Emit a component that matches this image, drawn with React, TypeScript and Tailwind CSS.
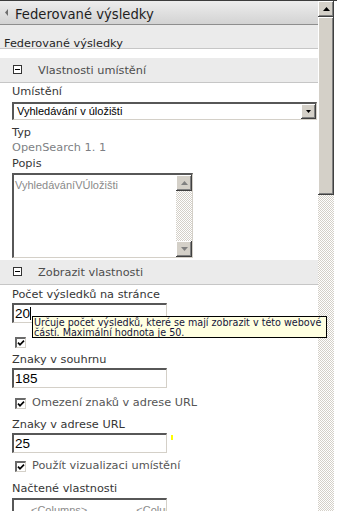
import React from "react";

const raised =
  "bg-[#d4d0c8] shadow-[inset_-1px_-1px_#404040,inset_1px_1px_#ffffff,inset_-2px_-2px_#808080]";
const inset =
  "border-t-2 border-l-2 border-r border-b border-t-[#575757] border-l-[#575757] border-r-[#d4d0c8] border-b-[#d4d0c8] bg-white";
const checker =
  "[background-image:repeating-conic-gradient(#d4d0c8_0%_25%,#ffffff_0%_50%)] [background-size:2px_2px]";
const dv = "font-['DejaVu_Sans',sans-serif]";
const ar = "font-['Liberation_Sans',Arial,sans-serif]";

function MinusBox() {
  return (
    <div className="mt-[7px] w-[9px] h-[9px] border border-[#333333] bg-white flex items-center justify-center shrink-0">
      <div className="w-[5px] h-px bg-black" />
    </div>
  );
}

function Section({ title, mt }: { title: string; mt: string }) {
  return (
    <div
      className={`${mt} h-[25px] shrink-0 bg-[#ebebeb] border-b border-[#c6c6c6] flex items-start pl-[13px]`}
    >
      <MinusBox />
      <span className={`${dv} ml-[16px] mt-[6px] leading-[13px] text-[11.3px] text-[#4d4d4d] whitespace-nowrap`}>
        {title}
      </span>
    </div>
  );
}

function Label({ text, mt, color = "text-[#363636]" }: { text: string; mt: string; color?: string }) {
  return (
    <div className={`${dv} ${mt} ${color} text-[11.3px] leading-[14px] whitespace-nowrap`}>{text}</div>
  );
}

function Check() {
  return (
    <div className="w-[11px] h-[11px] border-t-2 border-l-2 border-r border-b border-t-[#6a6a6a] border-l-[#6a6a6a] border-r-[#d4d0c8] border-b-[#d4d0c8] bg-white flex items-center justify-center shrink-0">
      <svg width="8" height="8" viewBox="0 0 8 8">
        <path d="M1 3.6 L3 5.8 L7 1.6" stroke="#000" strokeWidth="1.7" fill="none" />
      </svg>
    </div>
  );
}

function CheckRow({ text, mt }: { text: string; mt: string }) {
  return (
    <div className={`${mt} h-[14px] flex items-center pl-[3px]`}>
      <Check />
      <span className={`${dv} ml-[6px] text-[11.3px] leading-[14px] text-[#555555] whitespace-nowrap`}>{text}</span>
    </div>
  );
}

function TextInput({ value, mt, cursor }: { value: string; mt: string; cursor?: boolean }) {
  return (
    <div className={`${inset} ${mt} w-[155px] h-[20px] flex items-center pl-px`}>
      <span className={`${ar} text-[13.5px] leading-[17px] text-black`}>{value}</span>
      {cursor && <span className="w-px h-[13px] bg-black" />}
    </div>
  );
}

function UpTri({ color = "#000" }: { color?: string }) {
  return (
    <svg width="7" height="4" viewBox="0 0 7 4">
      <polygon points="0,4 3.5,0 7,4" fill={color} />
    </svg>
  );
}

export default function App() {
  return (
    <div className="relative w-[337px] h-[511px] overflow-hidden bg-white border-t border-[#3c3c3c] flex">
      <div className="w-[318px] shrink-0">
        {/* header */}
        <div className="h-[24px] border-b border-[#8e8e8e] bg-linear-to-b from-[#ededed] to-[#d3d3d3] flex items-start">
          <svg className="mt-[8px] ml-[5px]" width="3" height="7" viewBox="0 0 3 7">
            <polygon points="3,0 0,3.5 3,7" fill="#6e6e6e" />
          </svg>
          <span className={`${dv} ml-[7px] pt-[6px] leading-[16px] text-[13.2px] text-[#1e1e1e] whitespace-nowrap`}>
            Federované výsledky
          </span>
        </div>

        {/* title band */}
        <div className="h-[24px] bg-[#ebebeb] border-b border-[#c6c6c6] pl-[4px] pt-[12px]">
          <div className={`${dv} text-[11.3px] leading-[13px] text-[#262626] whitespace-nowrap`}>
            Federované výsledky
          </div>
        </div>

        <Section title="Vlastnosti umístění" mt="mt-[9px]" />

        <div className="pl-[12px] pr-px flex flex-col">
          <Label text="Umístění" mt="mt-[2px]" />
          <div className={`${inset} mt-[3px] h-[18px] flex items-center`}>
            <span className={`${ar} pl-[3px] flex-1 text-[11px] leading-[15px] text-black whitespace-nowrap`}>
              Vyhledávání v úložišti
            </span>
            <div className={`${raised} w-[15px] h-[15px] flex items-center justify-center`}>
              <svg width="5" height="3" viewBox="0 0 5 3">
                <polygon points="0,0 5,0 2.5,3" fill="#000" />
              </svg>
            </div>
          </div>
          <Label text="Typ" mt="mt-[6px]" />
          <Label text="OpenSearch 1. 1" mt="mt-[1px]" color="text-[#7d7f84]" />
          <Label text="Popis" mt="mt-[2px]" />
          <div className={`${inset} mt-[2px] w-[181px] h-[85px] flex`}>
            <div className={`${ar} flex-1 pl-px pt-[4px] text-[11px] leading-[13px] text-[#8a8a8a] whitespace-nowrap overflow-hidden`}>
              VyhledáváníVÚložišti
            </div>
            <div className="w-[16px] flex flex-col">
              <div className={`${raised} h-[16px] flex items-center justify-center`}>
                <UpTri color="#808080" />
              </div>
              <div className={`flex-1 ${checker}`} />
              <div className={`${raised} h-[16px] flex items-center justify-center`}>
                <svg width="7" height="4" viewBox="0 0 7 4">
                  <polygon points="0,0 7,0 3.5,4" fill="#808080" />
                </svg>
              </div>
            </div>
          </div>
        </div>

        <Section title="Zobrazit vlastnosti" mt="mt-[2px]" />

        <div className="pl-[12px] pr-px flex flex-col">
          <Label text="Počet výsledků na stránce" mt="mt-[3px]" />
          <TextInput value="20" mt="mt-[1px]" cursor />
          <CheckRow text="" mt="mt-[12px]" />
          <Label text="Znaky v souhrnu" mt="mt-[4px]" />
          <TextInput value="185" mt="mt-[1px]" />
          <CheckRow text="Omezení znaků v adrese URL" mt="mt-[8px]" />
          <Label text="Znaky v adrese URL" mt="mt-[8px]" />
          <TextInput value="25" mt="mt-[1px]" />
          <CheckRow text="Použít vizualizaci umístění" mt="mt-[6px]" />
          <Label text="Načtené vlastnosti" mt="mt-[9px]" />
          <div className={`${inset} mt-[2px] w-[155px] h-[24px] overflow-hidden`}>
            <div className={`${ar} pt-[4px] text-[11px] leading-[13px] text-[#8a8a8a] whitespace-nowrap flex`}>
              <span className="ml-[17px]">&lt;Columns&gt;</span>
              <span className="ml-[49px]">&lt;Columns&gt;</span>
            </div>
          </div>
        </div>
      </div>

      {/* main scrollbar */}
      <div className="w-[16px] flex flex-col shrink-0">
        <div className={`${raised} h-[16px] shrink-0 flex items-center justify-center`}>
          <UpTri />
        </div>
        <div className={`${raised} h-[178px] shrink-0`} />
        <div className={`flex-1 ${checker}`} />
      </div>
      <div className="flex-1 bg-white" />

      {/* tooltip */}
      <div className="absolute left-[32px] top-[315px] w-[295px] h-[22px] border border-black bg-[#ffffe1] z-10 pl-px pt-px">
        <div className={`${dv} text-[9.6px] leading-[10px] text-[#14143a] whitespace-nowrap`}>
          Určuje počet výsledků, které se mají zobrazit v této webové
          <br />
          části. Maximální hodnota je 50.
        </div>
      </div>

      {/* stray yellow mark */}
      <div className="absolute left-[171px] top-[434px] w-[2px] h-[5px] bg-[#ffff00]" />
    </div>
  );
}
